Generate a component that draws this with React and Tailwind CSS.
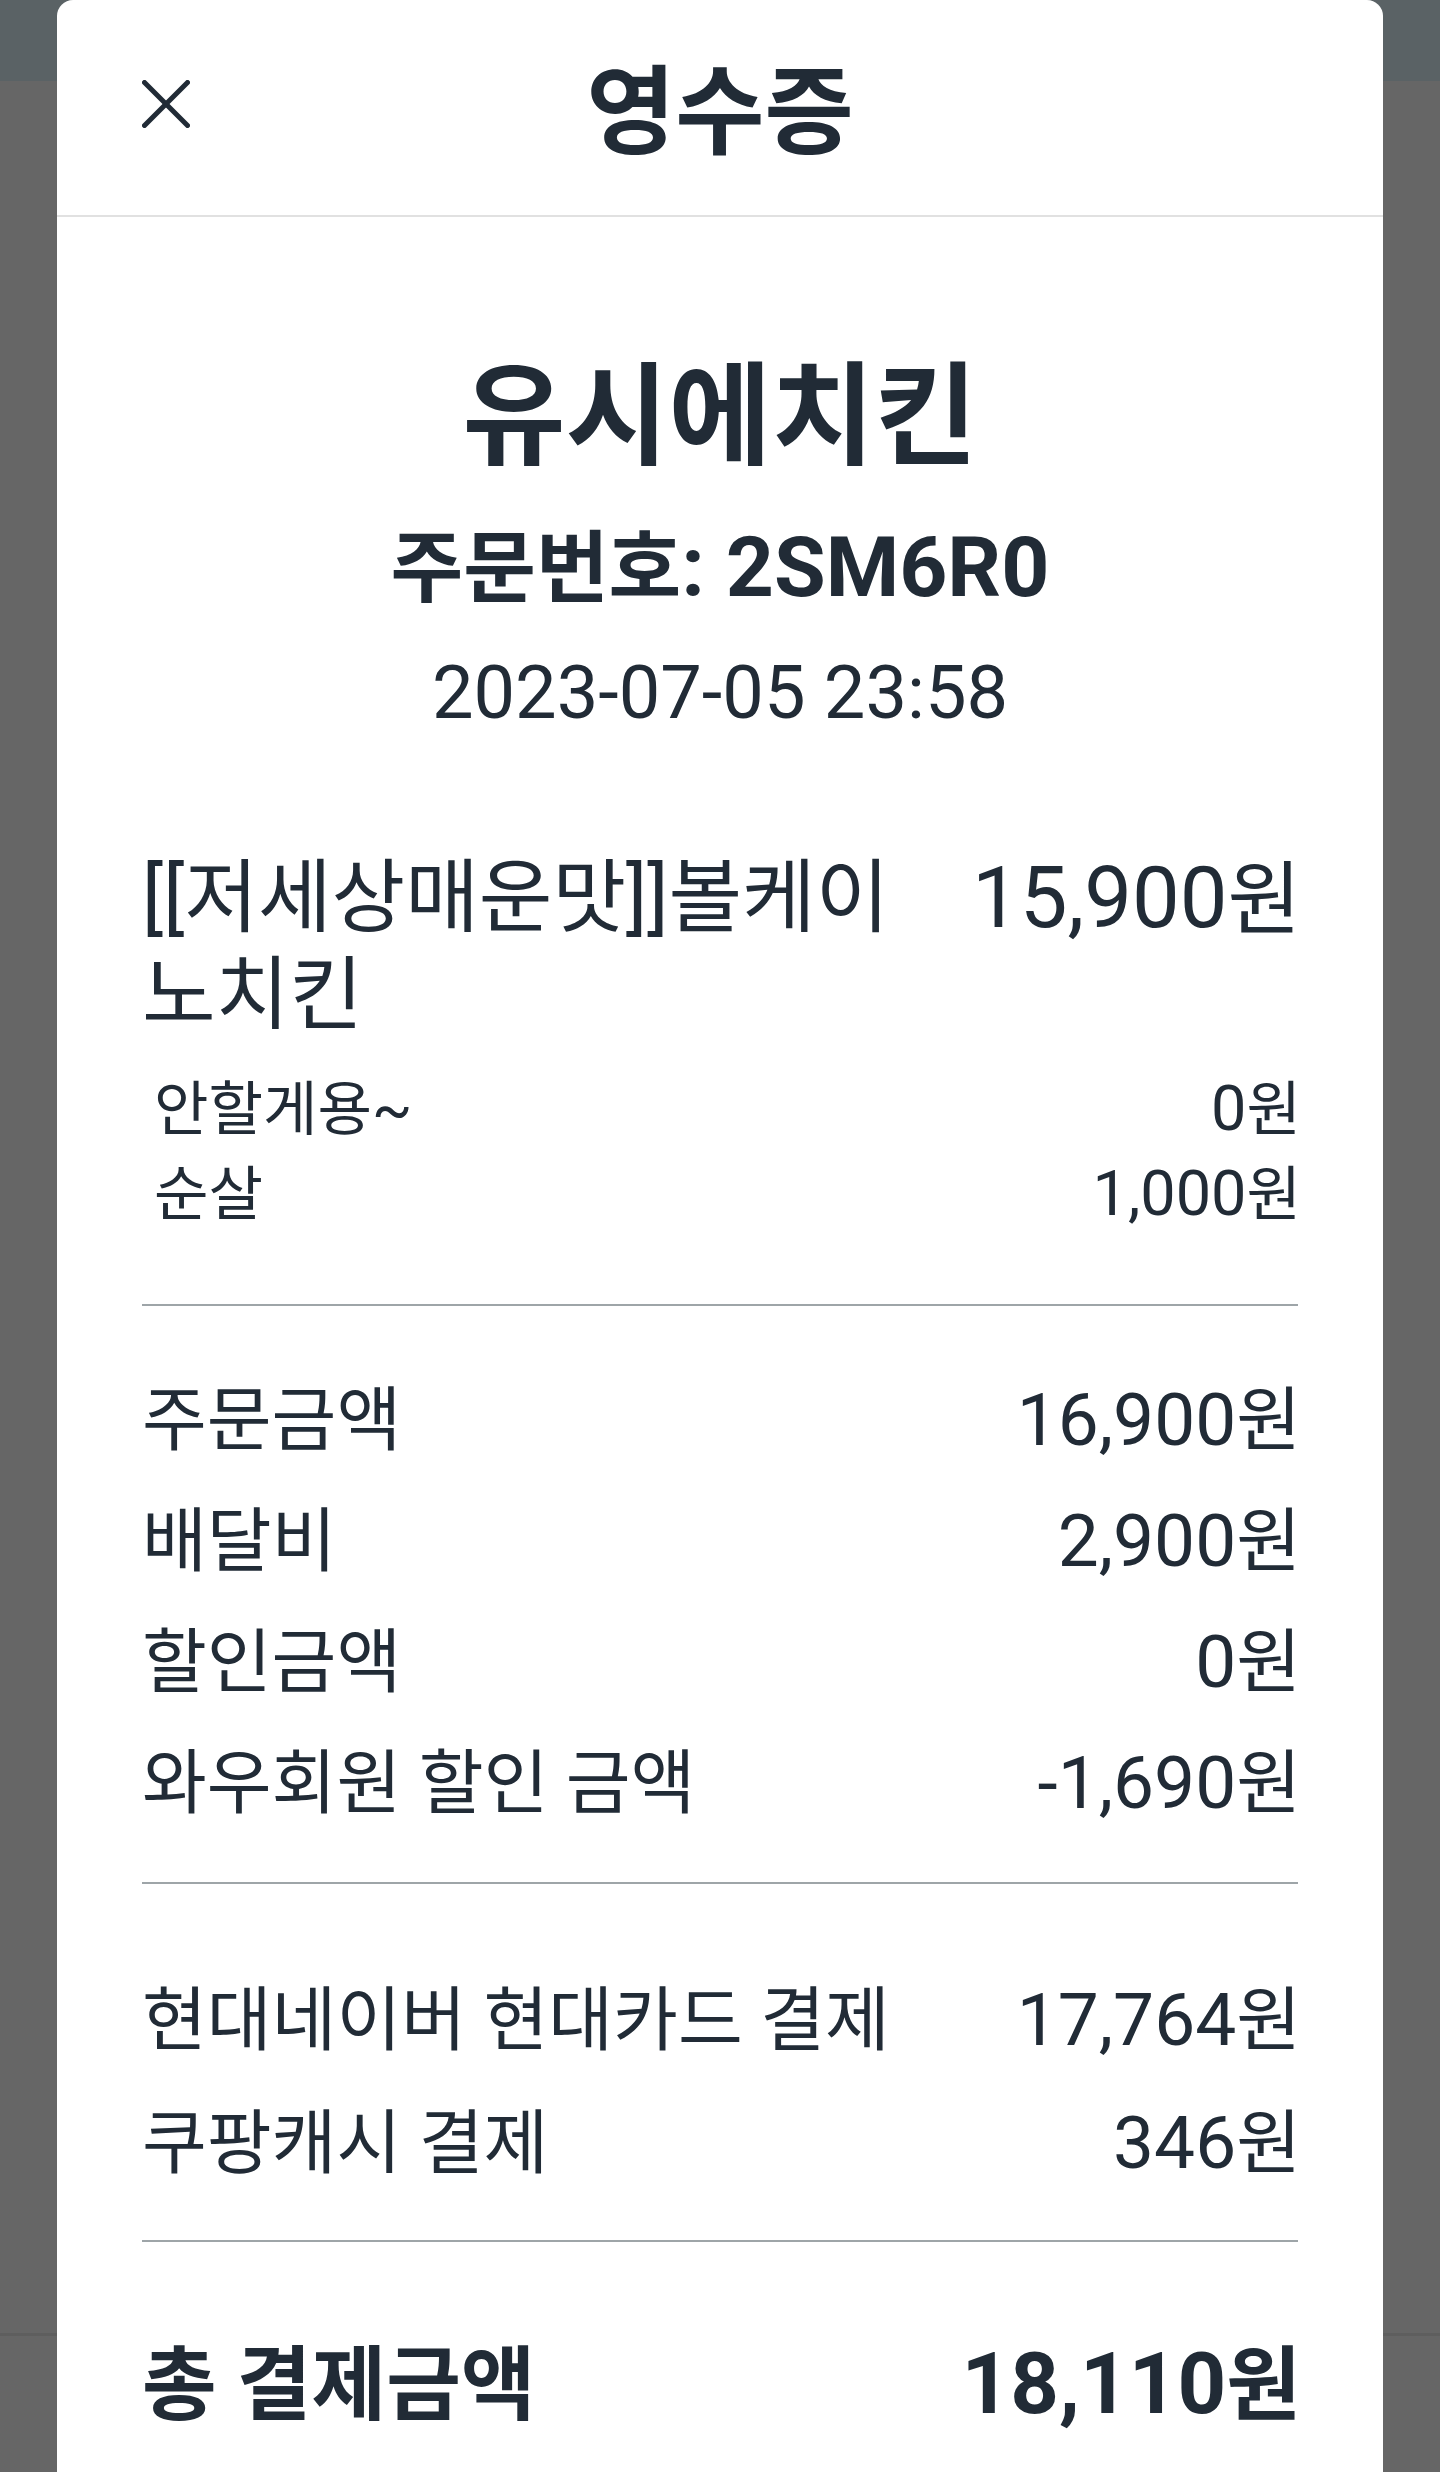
import React from 'react';

// Hangul in the reference runs a little smaller than the digits next to it
const Ko = ({ children, size = 'text-[0.94em]' }) =>
    String(children)
        .split(/([가-힣~]+(?: [가-힣]+)*)/)
        .map((part, i) =>
            /[가-힣]/.test(part) ? (
                <span key={i} className={`${size} leading-none`}>{part}</span>
            ) : (
                part
            )
        );

const Row = ({ label, value, className = '', size }) => (
    <div className={`flex items-start justify-between gap-12 ${className}`}>
        <span className="min-w-0">
            <Ko size={size}>{label}</Ko>
        </span>
        <span className="-mr-[3px] shrink-0 text-right">
            <Ko size={size}>{value}</Ko>
        </span>
    </div>
);

const Divider = () => <div className="h-[2px] bg-[#9ea5a8]" />;

const CloseIcon = () => (
    <svg width="48" height="48" viewBox="0 0 48 48" fill="none" stroke="currentColor" strokeWidth="5" strokeLinecap="round">
        <path d="M2.5 2.5L45.5 45.5" />
        <path d="M45.5 2.5L2.5 45.5" />
    </svg>
);

const options = [
    { name: '안할게용~', price: '0원' },
    { name: '순살', price: '1,000원' },
];

const amounts = [
    { label: '주문금액', value: '16,900원' },
    { label: '배달비', value: '2,900원' },
    { label: '할인금액', value: '0원' },
    { label: '와우회원 할인 금액', value: '-1,690원' },
];

const payments = [
    { label: '현대네이버 현대카드 결제', value: '17,764원' },
    { label: '쿠팡캐시 결제', value: '346원' },
];

export default function App() {
    return (
        <div className="relative h-[2472px] overflow-hidden font-[Roboto,'Noto_Sans_CJK_KR',sans-serif] text-[#212b36]">
            {/* dimmed page behind the sheet */}
            <div className="flex h-full flex-col">
                <div className="h-[81px] bg-[#5a6265]" />
                <div className="h-[2252px] bg-[#666666]" />
                <div className="h-[3px] bg-[#5e5e5e]" />
                <div className="flex-1 bg-[#666666]" />
            </div>

            {/* receipt sheet */}
            <div className="absolute left-[57px] top-0 h-[2520px] w-[1326px] rounded-t-[16px] bg-white">
                <header className="grid h-[217px] grid-cols-[1fr_auto_1fr] items-center border-b-2 border-[#e1e1e1] px-[85px]">
                    <button className="-mt-[8px] flex h-12 w-12 items-center justify-center text-[#212b36]">
                        <CloseIcon />
                    </button>
                    <h1 className="pt-[10px] text-[97px] font-bold leading-[110px]">영수증</h1>
                    <div />
                </header>

                <div className="px-[85px]">
                    <div className="pt-[141px] text-center">
                        <h2 className="text-[112px] font-bold leading-[120px]">유시에치킨</h2>
                        <p className="mt-[40px] text-[84px] font-bold leading-[100px]">
                            <Ko>주문번호: 2SM6R0</Ko>
                        </p>
                        <p className="mt-[30px] text-[74px] leading-[90px]">2023-07-05 23:58</p>
                    </div>

                    <div className="mt-[112px]">
                        <div className="flex items-start justify-between gap-12 text-[85px] leading-[97px]">
                            <span className="min-w-0 text-[80px]">[[저세상매운맛]]볼케이노치킨</span>
                            <span className="-mr-[3px] shrink-0 text-right">
                                <Ko>15,900원</Ko>
                            </span>
                        </div>
                        <div className="mt-[22px] text-[63px] leading-[85px]">
                            {options.map((o) => (
                                <Row key={o.name} label={o.name} value={o.price} className="pl-3" />
                            ))}
                        </div>
                    </div>

                    <div className="mt-[68px]">
                        <Divider />
                    </div>

                    <div className="pt-[54px] pb-[38px] text-[73px] leading-[121px]">
                        {amounts.map((a) => (
                            <Row key={a.label} label={a.label} value={a.value} size="text-[0.965em]" />
                        ))}
                    </div>

                    <Divider />

                    <div className="pt-[75px] pb-[35px] text-[73px] leading-[123px]">
                        {payments.map((p) => (
                            <Row key={p.label} label={p.label} value={p.value} size="text-[0.965em]" />
                        ))}
                    </div>

                    <Divider />

                    <div className="pt-[82px] text-[85px] font-bold leading-[120px]">
                        <Row label="총 결제금액" value="18,110원" size="text-[0.955em]" />
                    </div>
                </div>
            </div>
        </div>
    );
}
